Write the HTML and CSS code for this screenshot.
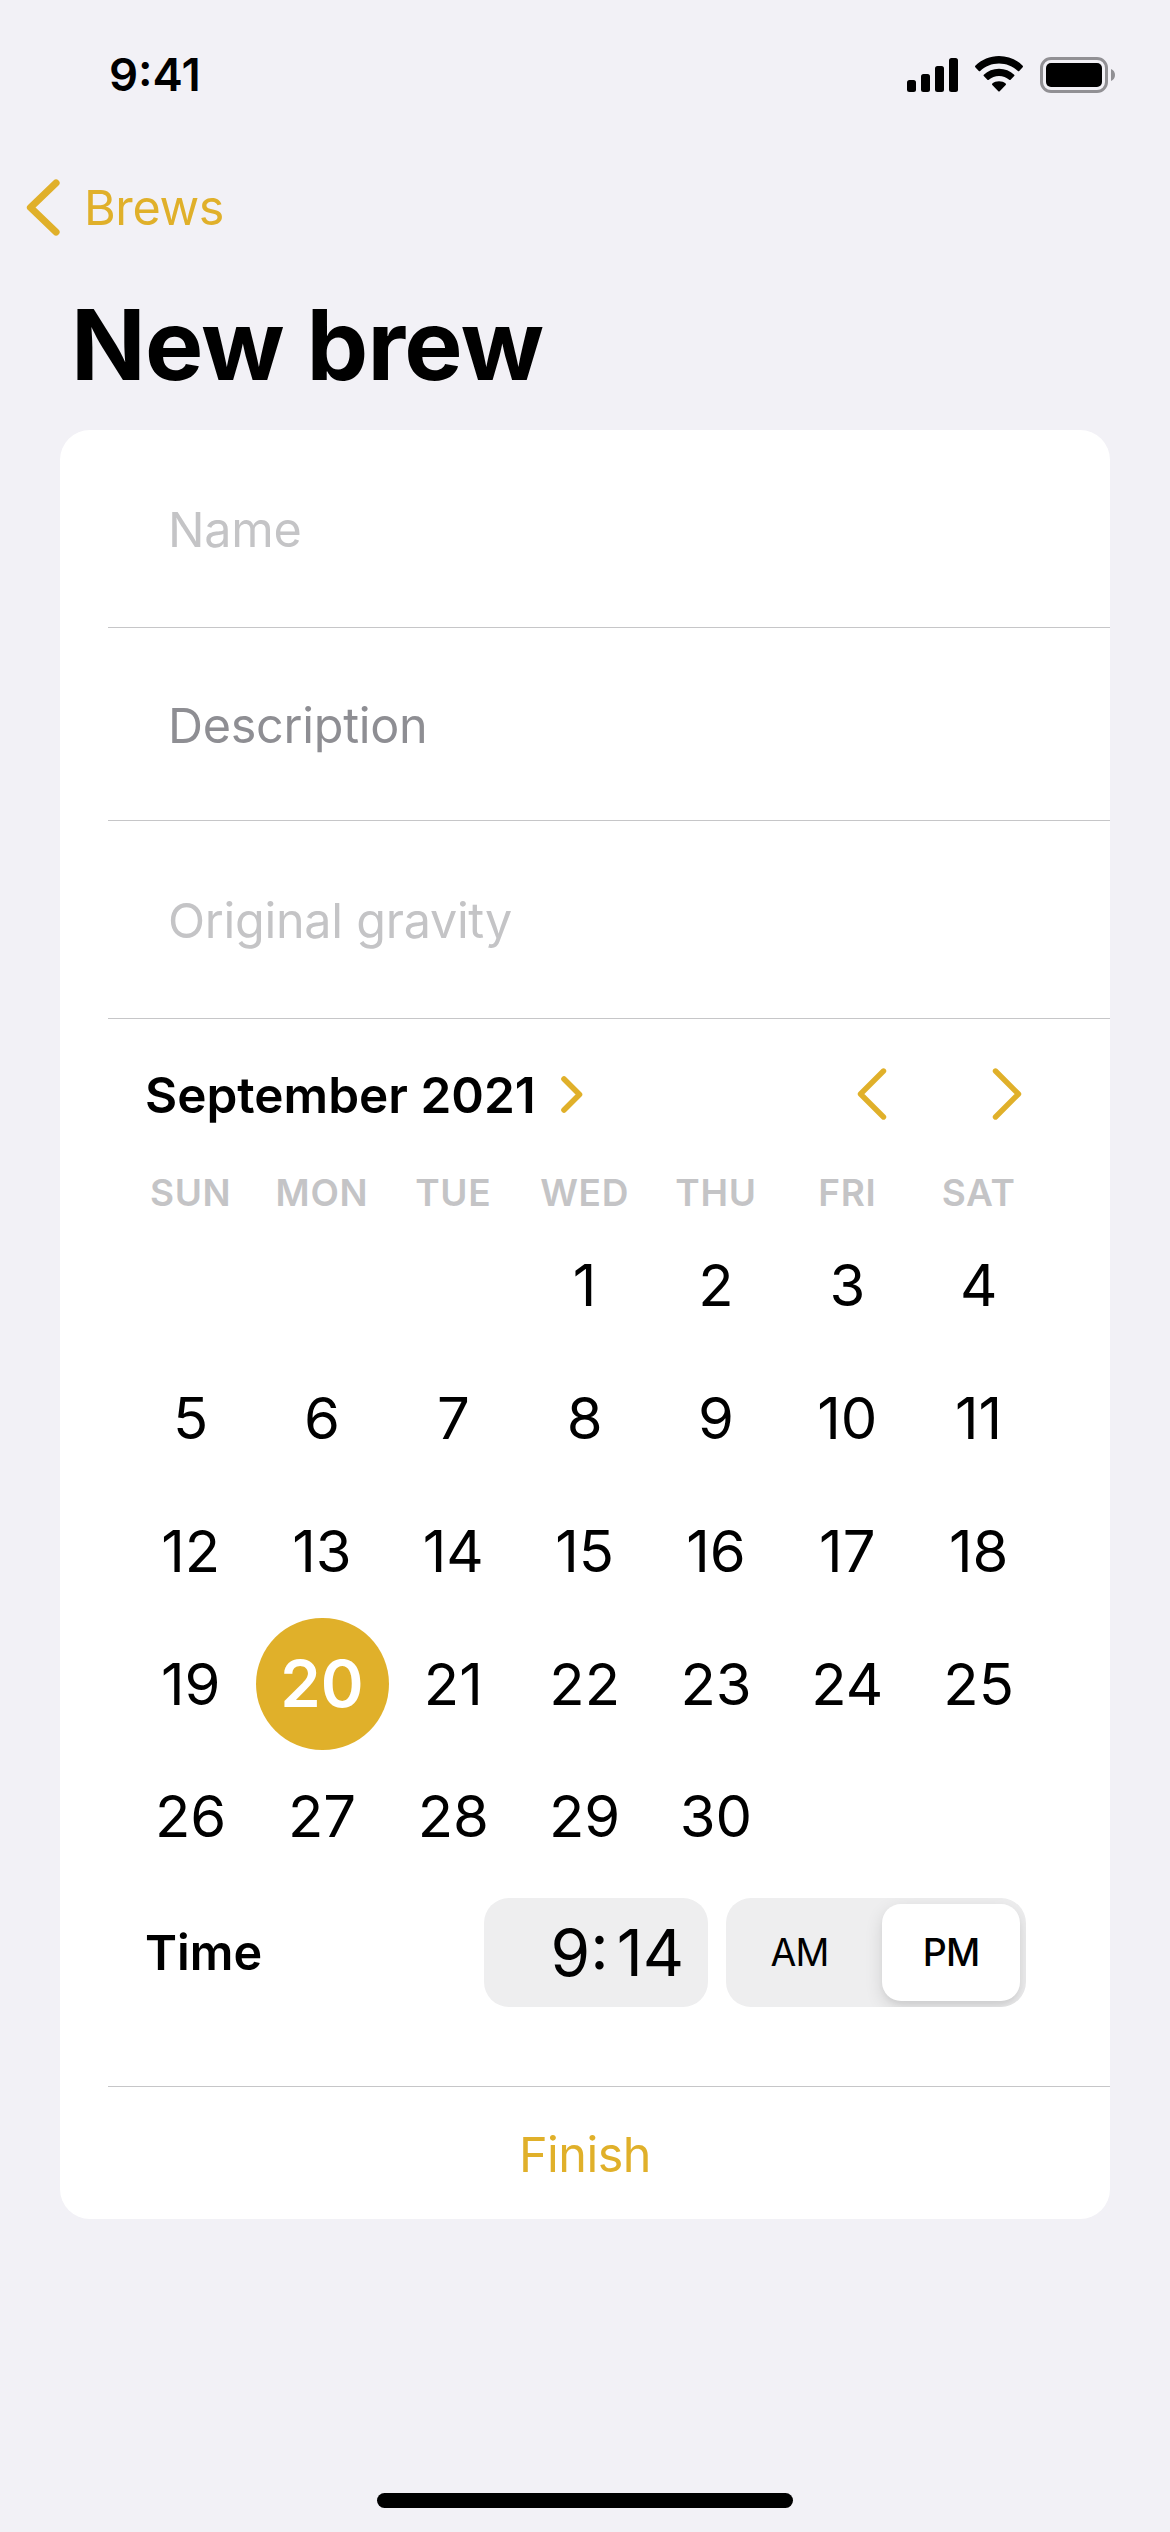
FILE: index.html
```
<!DOCTYPE html>
<html lang="en">
<head>
<meta charset="utf-8">
<title>New brew</title>
<link rel="stylesheet" href="styles.css">
</head>
<body>
<div class="screen">
  <header class="status">
    <span class="clock">9:41</span>
    <div class="indicators">
      <svg class="signal" width="51" height="34" viewBox="0 0 51 34">
        <rect x="0" y="22" width="9" height="12" rx="2.5"/>
        <rect x="14" y="16" width="9" height="18" rx="2.5"/>
        <rect x="28" y="8" width="9" height="26" rx="2.5"/>
        <rect x="42" y="0" width="9" height="34" rx="2.5"/>
      </svg>
      <svg class="wifi" width="48" height="36" viewBox="0 0 48 36">
        <path d="M24 0C33 0 41.300 3.400 47.700 9.800Q48.300 10.500 47.700 11.200L44.200 14.900Q43.500 15.500 42.800 14.900C37.700 10.100 31.100 7.400 24 7.400S10.300 10.100 5.200 14.900Q4.500 15.500 3.800 14.900L.3 11.200Q-.3 10.500 .3 9.800C6.700 3.400 15 0 24 0Z"/>
        <path d="M24 12.700C29.900 12.700 35.200 14.900 39.200 18.700Q39.900 19.400 39.200 20.100L35.600 23.700Q34.900 24.300 34.200 23.700C31.400 21.300 27.900 19.900 24 19.900S16.600 21.300 13.800 23.700Q13.100 24.300 12.400 23.700L8.800 20.100Q8.100 19.400 8.800 18.700C12.800 14.900 18.100 12.700 24 12.700Z"/>
        <path d="M24 25.200C26.600 25.200 28.900 26 30.700 27.600Q31.400 28.300 30.700 29L24.700 35.200Q24 35.900 23.300 35.200L17.300 29Q16.600 28.300 17.300 27.600C19.100 26 21.400 25.200 24 25.200Z"/>
      </svg>
      <svg class="battery" width="75" height="36" viewBox="0 0 75 36">
        <rect x="1.500" y="1.500" width="65" height="33" rx="9.500" fill="none" stroke="#919094" stroke-width="3"/>
        <rect x="6" y="6" width="56" height="24" rx="5"/>
        <path d="M71 12C73.500 13 75 15.300 75 18S73.500 23 71 24Z" fill="#919094"/>
      </svg>
    </div>
  </header>
  <nav class="nav">
    <svg width="34" height="57" viewBox="0 0 34 57"><path d="M30 4L4.500 28.500L30 53" stroke-width="7.200"/></svg>
    <span class="back">Brews</span>
  </nav>
  <h1 class="title">New brew</h1>
  <main class="card">
    <div class="field name"><span>Name</span></div>
    <div class="field description"><span>Description</span></div>
    <div class="field gravity"><span>Original gravity</span></div>
    <section class="picker">
      <div class="month-bar">
        <span class="month">September 2021</span>
        <svg class="expand" width="22" height="37" viewBox="0 0 22 37"><path d="M3 3L18.500 18.500L3 34" stroke-width="5.600"/></svg>
        <svg class="prev" width="30" height="52" viewBox="0 0 30 52"><path d="M26.500 3L3.500 26L26.500 49" stroke-width="5.400"/></svg>
        <svg class="next" width="30" height="52" viewBox="0 0 30 52"><path d="M3.500 3L26.500 26L3.500 49" stroke-width="5.400"/></svg>
      </div>
      <div class="weekdays">
        <span>SUN</span><span>MON</span><span>TUE</span><span>WED</span><span>THU</span><span>FRI</span><span>SAT</span>
      </div>
      <div class="days">
        <span class="first">1</span><span>2</span><span>3</span><span>4</span>
        <span>5</span><span>6</span><span>7</span><span>8</span><span>9</span><span>10</span><span>11</span>
        <span>12</span><span>13</span><span>14</span><span>15</span><span>16</span><span>17</span><span>18</span>
        <span>19</span><span class="selected">20</span><span>21</span><span>22</span><span>23</span><span>24</span><span>25</span>
        <span>26</span><span>27</span><span>28</span><span>29</span><span>30</span>
      </div>
      <div class="time-row">
        <span class="time-label">Time</span>
        <span class="time-value">9<span class="colon">:</span>14</span>
        <div class="segments"><span class="am">AM</span><span class="pm">PM</span></div>
      </div>
    </section>
    <div class="finish"><span>Finish</span></div>
  </main>
  <div class="home"></div>
</div>
</body>
</html>
```
FILE: styles.css
```
* { box-sizing: border-box; }

body {
  margin: 0;
  background: #f2f1f6;
  color: #000;
  font-family: Inter, "Liberation Sans", sans-serif;
}

svg { display: block; flex: none; }

.screen {
  display: flex;
  flex-direction: column;
  width: 1170px;
  height: 2532px;
  overflow: hidden;
}

.status {
  display: flex;
  justify-content: space-between;
  align-items: center;
  height: 149px;
  padding: 0 55px 0 109px;
}

.clock {
  font-size: 45.500px;
  font-weight: 600;
  letter-spacing: 0;
}

.indicators { display: flex; align-items: center; }
.wifi { margin: -2px 17px 0 17px; }

.nav {
  display: flex;
  align-items: center;
  height: 116px;
  padding-left: 26px;
}

.nav path, .month-bar path {
  fill: none;
  stroke: #e0b02a;
  stroke-linecap: round;
  stroke-linejoin: round;
}

.back {
  margin-left: 24px;
  color: #e0b02a;
  font-size: 48.500px;
  letter-spacing: -0.400px;
}

.title {
  height: 165px;
  margin: 0;
  padding: 15px 0 0 71px;
  font-size: 98px;
  line-height: 130px;
  font-weight: 700;
  letter-spacing: -0.700px;
}

.card {
  display: flex;
  flex-direction: column;
  width: 1050px;
  height: 1789px;
  margin-left: 60px;
  border-radius: 30px;
  background: #fff;
  overflow: hidden;
}

.field {
  display: flex;
  align-items: center;
  margin-left: 48px;
  padding: 2px 0 0 60px;
  border-bottom: 1px solid #c6c6c8;
  color: #c4c4c6;
  font-size: 48.500px;
  letter-spacing: -0.270px;
}

.name { height: 198px; }
.description { height: 193px; color: #8e8e93; }
.gravity { height: 198px; }

.picker {
  height: 1068px;
  margin-left: 48px;
  border-bottom: 1px solid #c6c6c8;
}

.month-bar {
  display: flex;
  align-items: center;
  height: 151px;
  padding: 0 88px 0 37px;
}

.month {
  font-size: 49.500px;
  font-weight: 600;
  letter-spacing: 0;
}

.expand { margin-left: 25px; }
.prev { margin-left: auto; }
.next { margin-left: 105px; }
.prev, .next { margin-top: -1px; }

.weekdays, .days {
  display: grid;
  grid-template-columns: repeat(7, 131.330px);
  margin-left: 17px;
  text-align: center;
}

.weekdays {
  height: 49.400px;
  line-height: 46px;
  color: #c4c4c6;
  font-size: 37px;
  font-weight: 600;
  letter-spacing: 0.700px;
}

.days {
  grid-auto-rows: 132.750px;
  line-height: 132.750px;
  font-size: 58px;
}

.first { grid-column: 4; }

.selected {
  justify-self: center;
  width: 133px;
  border-radius: 50%;
  background: #e0b02a;
  color: #fff;
  font-size: 65px;
  font-weight: 600;
}

.time-row {
  display: flex;
  align-items: center;
  height: 109px;
  margin-top: 14.600px;
  padding: 0 84px 0 37px;
}

.time-label {
  font-size: 48.500px;
  font-weight: 600;
}

.time-value {
  width: 224px;
  height: 109px;
  margin-left: auto;
  padding-right: 24px;
  border-radius: 25px;
  background: #eeeeef;
  font-size: 64px;
  line-height: 109px;
  text-align: right;
}

.colon { margin-right: 8px; }

.segments {
  display: grid;
  grid-template-columns: 150px 138px;
  width: 300px;
  height: 109px;
  margin-left: 18px;
  padding: 6px;
  border-radius: 25px;
  background: #eeeeef;
  font-size: 37.500px;
  line-height: 97px;
  letter-spacing: -0.800px;
  text-align: center;
  overflow: hidden;
}

.am { padding-right: 15px; }

.pm {
  border-radius: 19px;
  background: #fff;
  box-shadow: 0 6px 18px rgba(0, 0, 0, 0.12), 0 4px 4px rgba(0, 0, 0, 0.04);
  font-weight: 500;
}

.finish {
  display: flex;
  align-items: center;
  justify-content: center;
  flex: 1;
  padding-top: 2px;
  color: #e0b02a;
  font-size: 48.500px;
  letter-spacing: -0.500px;
}

.home {
  width: 416px;
  height: 15px;
  margin: 274px auto 0;
  border-radius: 8px;
  background: #000;
}
```
